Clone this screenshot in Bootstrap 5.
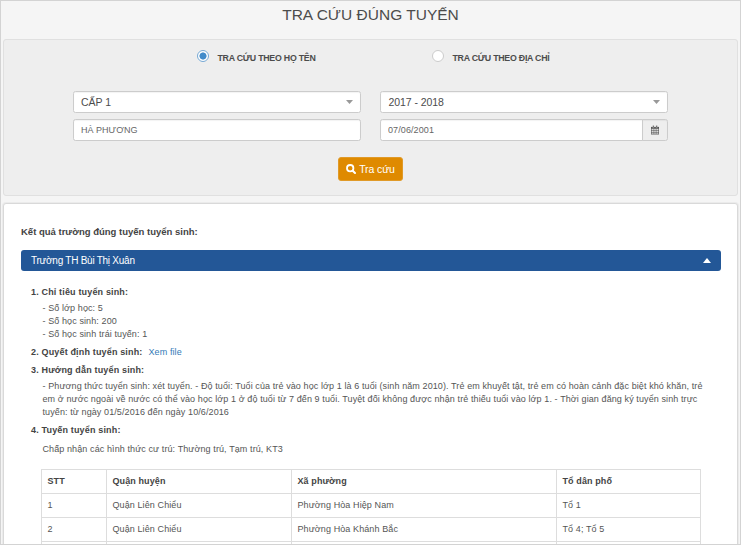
<!DOCTYPE html>
<html lang="vi">
<head>
<meta charset="utf-8">
<meta name="viewport" content="width=device-width, initial-scale=1">
<title>Tra cứu đúng tuyến</title>
<link href="https://cdn.jsdelivr.net/npm/bootstrap@5.3.0/dist/css/bootstrap.min.css" rel="stylesheet">
<style>
body{font-family:"Liberation Sans",Arial,sans-serif;font-size:9px;line-height:13px;color:#555;background:#f5f5f5}
.page-frame{height:545px;border:1px solid #d3d3d3;padding:0 2px}
.page-title{font-size:15.5px;line-height:27px;height:38px;color:#4c4c4c}
.page-title span,.fit{white-space:nowrap}
.search-panel{height:157px;background:#eee;border:1px solid #e0e0e0;border-radius:3px;padding:10px 69px 0}
.radio-row{height:41px;padding-left:124px}
.radio-row .form-check-input{width:12px;height:12px;margin:0;border-color:#ccc;background:#fff}
.radio-row .form-check-input:checked{border-color:#76a9d5;background:radial-gradient(circle,#428bca 0 3.2px,#fff 3.9px)}
.radio-row label{width:235px;height:14px;color:#4c4c4c;font-weight:700;gap:8.5px}
.radio-row label span{padding-top:2px;font-size:8.8px;letter-spacing:-.25px}
.fields{display:grid;grid-template-columns:288px 288px;column-gap:19px;row-gap:6px}
.fields .form-control,.fields .form-select,.fields .input-group-text{height:22px;min-height:22px;border-color:#ccc;border-radius:2.5px;padding:0 7px;font-size:9px;line-height:20px;color:#666;box-shadow:inset 0 1px 1px rgba(0,0,0,.05)}
.fields .form-select{padding:0 7px;font-size:10.5px;color:#4c4c4c;background:#fff}
.t-year{letter-spacing:-.08px;padding-left:.5px}
.fields .t-date{letter-spacing:.1px}
.fields .input-group .form-control{border-radius:2.5px 0 0 2.5px}
.fields .input-group-text{width:26px;padding:0 8px;background:#eee;border-radius:0 2.5px 2.5px 0}
.btn-search{width:65px;height:24px;margin-top:16px;background:#df8a00;border:1px solid #e09a28;border-radius:3px;color:#fff;font-size:10.5px;line-height:12px;letter-spacing:-.1px}
.btn-search:hover{background:#c97c00;color:#fff}
.result-panel{height:350px;margin-top:7px;background:#fff;border:1px solid #d9d9d9;border-radius:3px;padding:20px 16.5px 0 17px;box-shadow:0 0 0 1px #ebebeb}
.result-heading{font-size:9.5px;line-height:15px;height:14px;color:#444}
.school-bar{height:21px;margin-top:12px;padding:0 10px;background:#235797;border-radius:3px;color:#fff;font-size:10px}
.t-school{letter-spacing:-.25px}
.details{padding:15px 18px 0 10px;letter-spacing:.1px}
.details h2{font-size:9px;line-height:13px;font-weight:700;color:#444;margin:0;letter-spacing:.16px}
.details .indent{padding-left:11.5px}
.details a{color:#337ab7}
.district-table{width:659px;margin:13px 0 0 10px;table-layout:fixed;color:#555;border-color:#ddd}
.district-table>:not(caption)>*>*{height:24px;padding:0 5px 0 5.5px;border-color:#ddd;vertical-align:middle;color:#555;white-space:nowrap}
.district-table>thead>tr>th{color:#444}
</style>
<script src="https://cdn.jsdelivr.net/npm/bootstrap@5.3.0/dist/js/bootstrap.bundle.min.js"></script>
</head>
<body class="overflow-hidden">
<main class="page-frame overflow-hidden">
  <h1 class="page-title text-center fw-normal m-0"><span>TRA CỨU ĐÚNG TUYẾN</span></h1>
  <form class="search-panel">
    <div class="radio-row d-flex">
      <label class="d-flex fit"><input class="form-check-input" type="radio" name="mode" checked><span>TRA CỨU THEO HỌ TÊN</span></label>
      <label class="d-flex fit"><input class="form-check-input" type="radio" name="mode"><span>TRA CỨU THEO ĐỊA CHỈ</span></label>
    </div>
    <div class="fields">
      <div class="form-select d-flex justify-content-between align-items-center"><span>CẤP 1</span><svg width="7" height="4"><path d="M0 0h7L3.5 4z" fill="#999"/></svg></div>
      <div class="form-select d-flex justify-content-between align-items-center"><span class="t-year">2017 - 2018</span><svg width="7" height="4"><path d="M0 0h7L3.5 4z" fill="#999"/></svg></div>
      <input class="form-control" value="HÀ PHƯƠNG" aria-label="Họ tên">
      <div class="input-group flex-nowrap">
        <input class="form-control t-date" value="07/06/2001" aria-label="Ngày sinh">
        <span class="input-group-text"><svg width="9" height="10" viewBox="0 0 9 10"><path d="M0 1.5h9V10H0z" fill="#555"/><path d="M2 0h1.4v2.4H2zM5.6 0H7v2.4H5.6z" fill="#555" stroke="#eee" stroke-width=".3"/><path d="M.7 3.7h1.4v1.5H.7zm2 0h1.5v1.5H2.7zm2.1 0h1.5v1.5H4.8zm2.1 0h1.4v1.5H6.9zM.7 5.8h1.4v1.4H.7zm2 0h1.5v1.4H2.7zm2.1 0h1.5v1.4H4.8zm2.1 0h1.4v1.4H6.9zM.7 7.8h1.4v1.5H.7zm2 0h1.5v1.5H2.7zm2.1 0h1.5v1.5H4.8zm2.1 0h1.4v1.5H6.9z" fill="#eee"/></svg></span>
      </div>
    </div>
    <div class="d-flex justify-content-center"><button type="button" class="btn btn-search d-flex align-items-center justify-content-center p-0 fit"><svg width="10" height="10" viewBox="0 0 10 10" fill="none" stroke="#fff"><circle cx="4.2" cy="4.2" r="3.2" stroke-width="1.8"/><path d="M6.7 6.7 9 9" stroke-width="2" stroke-linecap="round"/></svg><span style="margin-left:3px">Tra cứu</span></button></div>
  </form>
  <section class="result-panel">
    <div class="result-heading fw-bold"><span class="fit">Kết quả trường đúng tuyến tuyển sinh:</span></div>
    <div class="school-bar d-flex align-items-center justify-content-between"><span class="fit t-school">Trường TH Bùi Thị Xuân</span><svg width="8" height="5"><path d="M0 5h8L4 0z" fill="#fff"/></svg></div>
    <div class="details">
      <h2><span class="fit">1. Chỉ tiêu tuyển sinh:</span></h2>
      <div class="indent" style="margin-top:3px">
        <div>- Số lớp học: 5</div>
        <div>- Số học sinh: 200</div>
        <div>- Số học sinh trái tuyến: 1</div>
      </div>
      <div class="d-flex" style="margin-top:5px"><h2><span class="fit">2. Quyết định tuyển sinh:</span></h2><a class="text-decoration-none fit" style="margin-left:6px" href="#">Xem file</a></div>
      <h2 style="margin-top:5px"><span class="fit">3. Hướng dẫn tuyển sinh:</span></h2>
      <div class="indent" style="margin-top:3px">
        <div class="fit">- Phương thức tuyển sinh: xét tuyển. - Độ tuổi: Tuổi của trẻ vào học lớp 1 là 6 tuổi (sinh năm 2010). Trẻ em khuyết tật, trẻ em có hoàn cảnh đặc biệt khó khăn, trẻ</div>
        <div class="fit">em ở nước ngoài về nước có thể vào học lớp 1 ở độ tuổi từ 7 đến 9 tuổi. Tuyệt đối không được nhận trẻ thiếu tuổi vào lớp 1. - Thời gian đăng ký tuyển sinh trực</div>
        <div class="fit">tuyến: từ ngày 01/5/2016 đến ngày 10/6/2016</div>
      </div>
      <h2 style="margin-top:5px"><span class="fit">4. Tuyến tuyển sinh:</span></h2>
      <div class="indent" style="margin-top:6px"><span class="fit">Chấp nhận các hình thức cư trú: Thường trú, Tạm trú, KT3</span></div>
      <table class="table table-bordered district-table">
        <colgroup><col style="width:65px"><col style="width:185px"><col style="width:265px"><col style="width:144px"></colgroup>
        <thead><tr><th>STT</th><th>Quận huyện</th><th>Xã phường</th><th>Tổ dân phố</th></tr></thead>
        <tbody>
          <tr><td>1</td><td>Quận Liên Chiểu</td><td>Phường Hòa Hiệp Nam</td><td>Tổ 1</td></tr>
          <tr><td>2</td><td>Quận Liên Chiểu</td><td>Phường Hòa Khánh Bắc</td><td>Tổ 4; Tổ 5</td></tr>
          <tr><td></td><td></td><td></td><td></td></tr>
        </tbody>
      </table>
    </div>
  </section>
</main>
</body>
</html>
